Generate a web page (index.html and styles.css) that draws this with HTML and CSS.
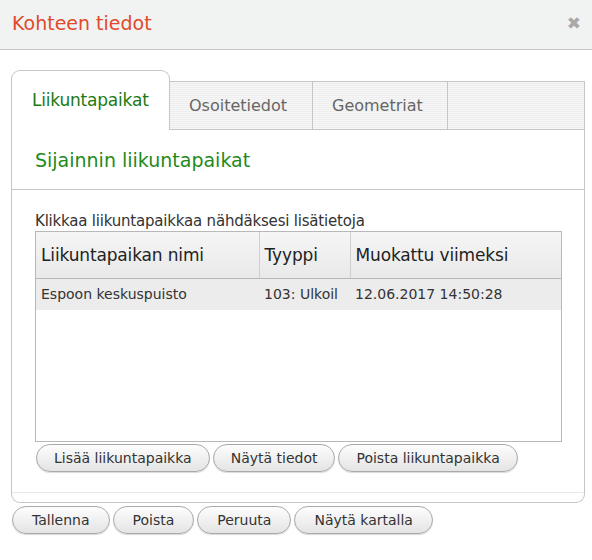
FILE: index.html
```html
<!DOCTYPE html>
<html lang="fi">
<head>
<meta charset="utf-8">
<title>Kohteen tiedot</title>
<link rel="stylesheet" href="styles.css">
</head>
<body>
<div class="dialog">
  <div class="dialog-header">
    <h1 class="dialog-title">Kohteen tiedot</h1>
    <span class="close">&#x2716;</span>
  </div>
  <div class="dialog-body">
    <div class="tabs">
      <div class="tab active">Liikuntapaikat</div>
      <div class="tab">Osoitetiedot</div>
      <div class="tab">Geometriat</div>
      <div class="tab-fill"></div>
    </div>
    <div class="panel">
      <h2 class="section-title">Sijainnin liikuntapaikat</h2>
      <div class="panel-content">
        <p class="hint">Klikkaa liikuntapaikkaa nähdäksesi lisätietoja</p>
        <div class="grid">
          <table>
            <colgroup><col class="c1"><col class="c2"><col class="c3"></colgroup>
            <thead>
              <tr><th>Liikuntapaikan nimi</th><th>Tyyppi</th><th>Muokattu viimeksi</th></tr>
            </thead>
            <tbody>
              <tr class="selected"><td><div class="cell">Espoon keskuspuisto</div></td><td><div class="cell">103: Ulkoil</div></td><td><div class="cell">12.06.2017 14:50:28</div></td></tr>
            </tbody>
          </table>
        </div>
        <div class="btn-row">
          <button class="btn">Lisää liikuntapaikka</button>
          <button class="btn">Näytä tiedot</button>
          <button class="btn">Poista liikuntapaikka</button>
        </div>
      </div>
    </div>
    <div class="btn-row footer">
      <button class="btn">Tallenna</button>
      <button class="btn">Poista</button>
      <button class="btn">Peruuta</button>
      <button class="btn">Näytä kartalla</button>
    </div>
  </div>
</div>
</body>
</html>
```

FILE: styles.css
```css
* { box-sizing: border-box; }
html, body { margin: 0; padding: 0; background: #fff; }
body { font-family: "DejaVu Sans", "Open Sans", sans-serif; color: #333; width: 592px; height: 560px; overflow: hidden; }

.dialog-header {
  height: 50px;
  background: #f1f2f2;
  border-bottom: 1px solid #c8c8c8;
  display: flex;
  align-items: center;
  justify-content: space-between;
  padding: 0 11px 4px 12px;
}
.dialog-title {
  margin: 0;
  font-size: 19px;
  font-weight: normal;
  color: #e04a2b;
  letter-spacing: 0;
}
.close { color: #a9a9a9; font-size: 17px; font-weight: bold; }

.dialog-body { padding: 20px 7px 0 11px; }

.tabs { display: flex; align-items: flex-end; height: 60px; }
.tab {
  height: 49px;
  padding: 0 19px;
  display: flex;
  align-items: center;
  font-size: 16px;
  letter-spacing: 0;
  color: #666;
  border-top: 1px solid #c6c6c6;
  border-right: 1px solid #c6c6c6;
  border-bottom: 1px solid #c6c6c6;
  background: repeating-linear-gradient(#f6f6f6 0 1px, #eeeeee 1px 2px);
}
.tab.active {
  width: 159px;
  height: 60px;
  padding: 0 0 1px 20px;
  font-size: 17px;
  letter-spacing: -0.2px;
  color: #1b7a12;
  background: #fff;
  border: 1px solid #c6c6c6;
  border-bottom: none;
  border-radius: 9px 9px 0 0;
}
.tab:nth-child(2) { width: 143px; }
.tab:nth-child(3) { width: 135px; }
.tab-fill {
  flex: 1;
  height: 49px;
  border-top: 1px solid #c6c6c6;
  border-right: 1px solid #c6c6c6;
  border-bottom: 1px solid #c6c6c6;
  background: repeating-linear-gradient(#f6f6f6 0 1px, #eeeeee 1px 2px);
}

.panel {
  border: 1px solid #c6c6c6;
  border-top: none;
  border-radius: 0 0 9px 9px;
  height: 373px;
}
.section-title {
  margin: 0;
  height: 60px;
  border-bottom: 1px solid #c6c6c6;
  font-size: 19px;
  font-weight: normal;
  letter-spacing: 0;
  color: #1f8a1c;
  padding: 19px 0 0 23px;
}
.panel-content {
  height: 303px;
  padding: 22px 23px 0 23px;
  border-bottom: 1px solid #e8e8e8;
}
.hint { margin: 0 0 1px 0; font-size: 15px; line-height: 18px; color: #333; letter-spacing: -0.2px; }

.grid {
  width: 527px;
  height: 211px;
  border: 1px solid #b8b8b8;
  background: #fff;
}
table { border-collapse: collapse; table-layout: fixed; width: 525px; }
col.c1 { width: 223px; }
col.c2 { width: 91px; }
col.c3 { width: 211px; }
th {
  height: 46px;
  font-size: 17px;
  font-weight: normal;
  text-align: left;
  padding: 0 5px;
  letter-spacing: -0.15px;
  color: #222;
  background: linear-gradient(#f5f5f5, #e9e9e9);
  border-right: 1px solid #cfcfcf;
  border-bottom: 1px solid #b8b8b8;
  white-space: nowrap;
  overflow: hidden;
}
th:last-child { border-right: none; }
td {
  height: 32px;
  font-size: 14px;
  padding: 0 5px;
  color: #333;
  letter-spacing: 0;
}
.cell { white-space: nowrap; overflow: hidden; }
tr.selected td { background: #ececec; }

.btn-row { display: flex; gap: 3px; margin-top: 2px; padding-left: 1px; }
.btn {
  height: 28px;
  padding: 0 17px;
  border: 1px solid #a9a9a9;
  border-radius: 14px;
  background: linear-gradient(#fdfdfd, #e4e4e4);
  font-family: inherit;
  font-size: 14px;
  letter-spacing: 0;
  color: #333;
  box-shadow: 0 1px 1px rgba(0,0,0,0.15);
}
.footer { margin-top: 3px; padding-left: 1px; }
.footer .btn { padding: 0 19px; }
```
